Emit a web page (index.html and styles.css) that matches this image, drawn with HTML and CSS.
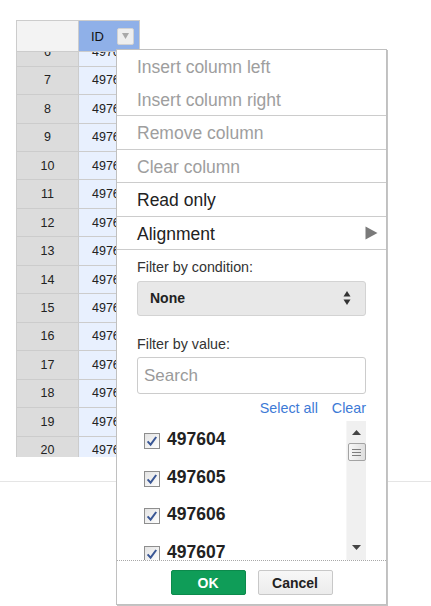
FILE: index.html
```html
<!DOCTYPE html>
<html>
<head>
<meta charset="utf-8">
<link rel="stylesheet" href="styles.css">
</head>
<body>
<div class="page">
  <div class="grid">
    <div class="grid-head">
      <div class="corner"></div>
      <div class="col-head">
        <span class="col-title">ID</span>
        <span class="col-btn"><svg width="7" height="6" viewBox="0 0 7 6"><polygon points="0,0 7,0 3.5,6" fill="#a8a8a8"/></svg></span>
      </div>
    </div>
    <div class="grid-body">
      <div class="grid-rows">
        <div class="row"><div class="rh">6</div><div class="cell">497601</div></div>
        <div class="row"><div class="rh">7</div><div class="cell">497602</div></div>
        <div class="row"><div class="rh">8</div><div class="cell">497603</div></div>
        <div class="row"><div class="rh">9</div><div class="cell">497604</div></div>
        <div class="row"><div class="rh">10</div><div class="cell">497605</div></div>
        <div class="row"><div class="rh">11</div><div class="cell">497606</div></div>
        <div class="row"><div class="rh">12</div><div class="cell">497607</div></div>
        <div class="row"><div class="rh">13</div><div class="cell">497608</div></div>
        <div class="row"><div class="rh">14</div><div class="cell">497609</div></div>
        <div class="row"><div class="rh">15</div><div class="cell">497610</div></div>
        <div class="row"><div class="rh">16</div><div class="cell">497611</div></div>
        <div class="row"><div class="rh">17</div><div class="cell">497612</div></div>
        <div class="row"><div class="rh">18</div><div class="cell">497613</div></div>
        <div class="row"><div class="rh">19</div><div class="cell">497614</div></div>
        <div class="row"><div class="rh">20</div><div class="cell">497615</div></div>
      </div>
    </div>
  </div>
  <div class="rule"></div>

  <div class="menu">
    <div class="mi off">Insert column left</div>
    <div class="mi off">Insert column right</div>
    <div class="sep"></div>
    <div class="mi off">Remove column</div>
    <div class="sep"></div>
    <div class="mi off">Clear column</div>
    <div class="sep"></div>
    <div class="mi">Read only</div>
    <div class="sep"></div>
    <div class="mi sub"><span>Alignment</span><svg width="13" height="14" viewBox="0 0 13 14"><polygon points="0.5,0.5 12.5,7 0.5,13.5" fill="#7a7a7a"/></svg></div>
    <div class="sep"></div>
    <div class="filter">
      <div class="flabel">Filter by condition:</div>
      <div class="select">
        <span class="select-val">None</span>
        <svg class="select-arrows" width="8" height="15" viewBox="0 0 8 15"><polygon points="4,0 7.5,5.5 0.5,5.5" fill="#333"/><polygon points="0.5,8.5 7.5,8.5 4,14" fill="#333"/></svg>
      </div>
      <div class="flabel second">Filter by value:</div>
      <input class="search" type="text" placeholder="Search">
      <div class="links"><span class="link">Select all</span><span class="link">Clear</span></div>
      <div class="list">
        <div class="items">
          <div class="item"><span class="cb"><svg width="16" height="16" viewBox="0 0 16 16"><defs><linearGradient id="cbg" x1="0" y1="0" x2="1" y2="1"><stop offset="0" stop-color="#e2e2e2"/><stop offset="1" stop-color="#ffffff"/></linearGradient></defs><rect x="0.5" y="0.5" width="15" height="15" fill="url(#cbg)" stroke="#8e8e8e"/><path d="M3.6 8.4 L6.6 11.6 L12.2 4" fill="none" stroke="#3a5795" stroke-width="2"/></svg></span><span class="val">497604</span></div>
          <div class="item"><span class="cb"><svg width="16" height="16" viewBox="0 0 16 16"><rect x="0.5" y="0.5" width="15" height="15" fill="url(#cbg)" stroke="#8e8e8e"/><path d="M3.6 8.4 L6.6 11.6 L12.2 4" fill="none" stroke="#3a5795" stroke-width="2"/></svg></span><span class="val">497605</span></div>
          <div class="item"><span class="cb"><svg width="16" height="16" viewBox="0 0 16 16"><rect x="0.5" y="0.5" width="15" height="15" fill="url(#cbg)" stroke="#8e8e8e"/><path d="M3.6 8.4 L6.6 11.6 L12.2 4" fill="none" stroke="#3a5795" stroke-width="2"/></svg></span><span class="val">497606</span></div>
          <div class="item"><span class="cb"><svg width="16" height="16" viewBox="0 0 16 16"><rect x="0.5" y="0.5" width="15" height="15" fill="url(#cbg)" stroke="#8e8e8e"/><path d="M3.6 8.4 L6.6 11.6 L12.2 4" fill="none" stroke="#3a5795" stroke-width="2"/></svg></span><span class="val">497607</span></div>
        </div>
        <div class="sb">
          <div class="sb-btn"><svg width="9" height="5" viewBox="0 0 9 5"><polygon points="4.5,0 9,5 0,5" fill="#444"/></svg></div>
          <div class="sb-thumb"><span class="grip"></span><span class="grip"></span><span class="grip"></span></div>
          <div class="sb-space"></div>
          <div class="sb-btn down"><svg width="9" height="5" viewBox="0 0 9 5"><polygon points="0,0 9,0 4.5,5" fill="#444"/></svg></div>
        </div>
      </div>
    </div>
    <div class="footer">
      <button class="btn ok">OK</button>
      <button class="btn cancel">Cancel</button>
    </div>
  </div>
</div>
</body>
</html>
```

FILE: styles.css
```css
* { box-sizing: border-box; }
html, body { margin: 0; padding: 0; }
body {
  width: 431px;
  height: 606px;
  overflow: hidden;
  background: #fff;
  font-family: "Liberation Sans", Arial, sans-serif;
  color: #222;
}
.page {
  position: relative;
  height: 606px;
  padding-top: 20px;
}

/* grid */
.grid { margin-left: 16px; width: 124px; }
.grid-head { display: flex; height: 32px; }
.corner {
  width: 63px;
  background: #f3f3f3;
  border: 1px solid #cccccc;
}
.col-head {
  width: 61px;
  background: #8fb0e8;
  border-top: 1px solid #cccccc;
  border-right: 1px solid #cccccc;
  border-bottom: 1px solid #cccccc;
  display: flex;
  align-items: center;
  justify-content: space-between;
  padding: 0 5px 0 12px;
}
.col-title { font-size: 13px; color: #111; }
.col-btn {
  width: 17px;
  height: 17px;
  background: #eeeeee;
  border: 1px solid #d2d2d2;
  border-radius: 2px;
  display: flex;
  align-items: center;
  justify-content: center;
}
.grid-body { height: 405px; overflow: hidden; }
.grid-rows { margin-top: -13.8px; }
.row { display: flex; height: 28.46px; font-size: 12.5px; color: #222; }
.rh {
  width: 63px;
  background: #dcdcdc;
  border-left: 1px solid #cccccc;
  border-right: 1px solid #cccccc;
  border-bottom: 1px solid #cccccc;
  display: flex;
  align-items: center;
  justify-content: center;
}
.cell {
  width: 61px;
  background: #e8f0fe;
  border-right: 1px solid #cccccc;
  border-bottom: 1px solid #cccccc;
  display: flex;
  align-items: center;
  padding-left: 13px;
  overflow: hidden;
  white-space: nowrap;
}
.rule { margin-top: 24px; border-top: 1px solid #e5e5e5; }

/* menu */
.menu {
  position: absolute;
  left: 116px;
  top: 49px;
  width: 271px;
  height: 556px;
  background: #fff;
  border: 1px solid #c0c0c0;
  box-shadow: 1px 1px 0 #c4c4c4;
  display: flex;
  flex-direction: column;
}
.mi {
  height: 32.5px;
  padding: 2px 8px 0 20px;
  line-height: 30.5px;
  font-size: 17.5px;
  color: #222;
  white-space: nowrap;
}
.mi.off { color: #9e9e9e; }
.mi.sub { display: flex; align-items: center; justify-content: space-between; }
.mi.sub svg { margin-top: -1px; }
.sep { height: 1px; background: #cccccc; flex: none; }

.filter { padding: 9px 20px 0 20px; display: flex; flex-direction: column; }
.flabel { font-size: 14.3px; line-height: 17px; color: #333; }
.flabel.second { margin-top: 20px; }
.select {
  margin-top: 5px;
  height: 34.5px;
  background: #e8e8e8;
  border: 1px solid #d3d3d3;
  border-radius: 3px;
  display: flex;
  align-items: center;
  justify-content: space-between;
  padding: 0 14px 0 12px;
}
.select-val { font-size: 14px; font-weight: bold; color: #222; }
.search {
  margin-top: 4.5px;
  height: 37px;
  width: 100%;
  border: 1px solid #cccccc;
  border-radius: 3px;
  padding: 0 6px;
  font-family: "Liberation Sans", Arial, sans-serif;
  font-size: 17px;
  color: #222;
  background: #fff;
  outline: none;
}
.search::placeholder { color: #9a9a9a; }
.links {
  margin-top: 5.5px;
  display: flex;
  justify-content: flex-end;
  gap: 14px;
  font-size: 14.3px;
  line-height: 17px;
}
.link { color: #3d7ad6; }
.list {
  margin-top: 4.5px;
  height: 139px;
  display: flex;
  overflow: hidden;
}
.items { flex: 1; overflow: hidden; }
.item {
  height: 37.5px;
  display: flex;
  align-items: center;
  padding-left: 7px;
  gap: 7px;
}
.cb { width: 16px; height: 16px; margin-top: 3px; display: block; }
.cb svg { display: block; }
.val { font-size: 17.5px; font-weight: bold; color: #222; }
.sb {
  width: 20px;
  background: #f0f0f0;
  border-left: 1px solid #f6f6f6;
  display: flex;
  flex-direction: column;
  align-items: center;
}
.sb-btn { height: 21px; width: 100%; display: flex; align-items: center; justify-content: center; flex: none; padding-top: 1px; }
.sb-btn.down { height: 20px; padding-top: 0; padding-bottom: 6px; }
.sb-thumb {
  width: 18px;
  height: 18px;
  margin-top: 1px;
  border: 1px solid #a3a3a3;
  border-radius: 2px;
  background: linear-gradient(to right, #f7f7f7, #dedede);
  display: flex;
  flex-direction: column;
  align-items: center;
  justify-content: center;
  gap: 2px;
  flex: none;
}
.grip { width: 9px; height: 1px; background: #7d7d7d; display: block; }
.sb-space { flex: 1; }

.footer {
  border-top: 1px dotted #a8a8a8;
  padding: 9px 0 0 0;
  display: flex;
  justify-content: center;
  gap: 12px;
}
.btn {
  width: 75px;
  height: 25px;
  padding: 0;
  font-family: "Liberation Sans", Arial, sans-serif;
  font-size: 14px;
  font-weight: bold;
  border-radius: 2px;
}
.ok { background: #0f9d58; border: 1px solid #0c8a4c; color: #fff; }
.cancel { background: linear-gradient(#f7f7f7, #ececec); border: 1px solid #c8c8c8; color: #222; }
```
